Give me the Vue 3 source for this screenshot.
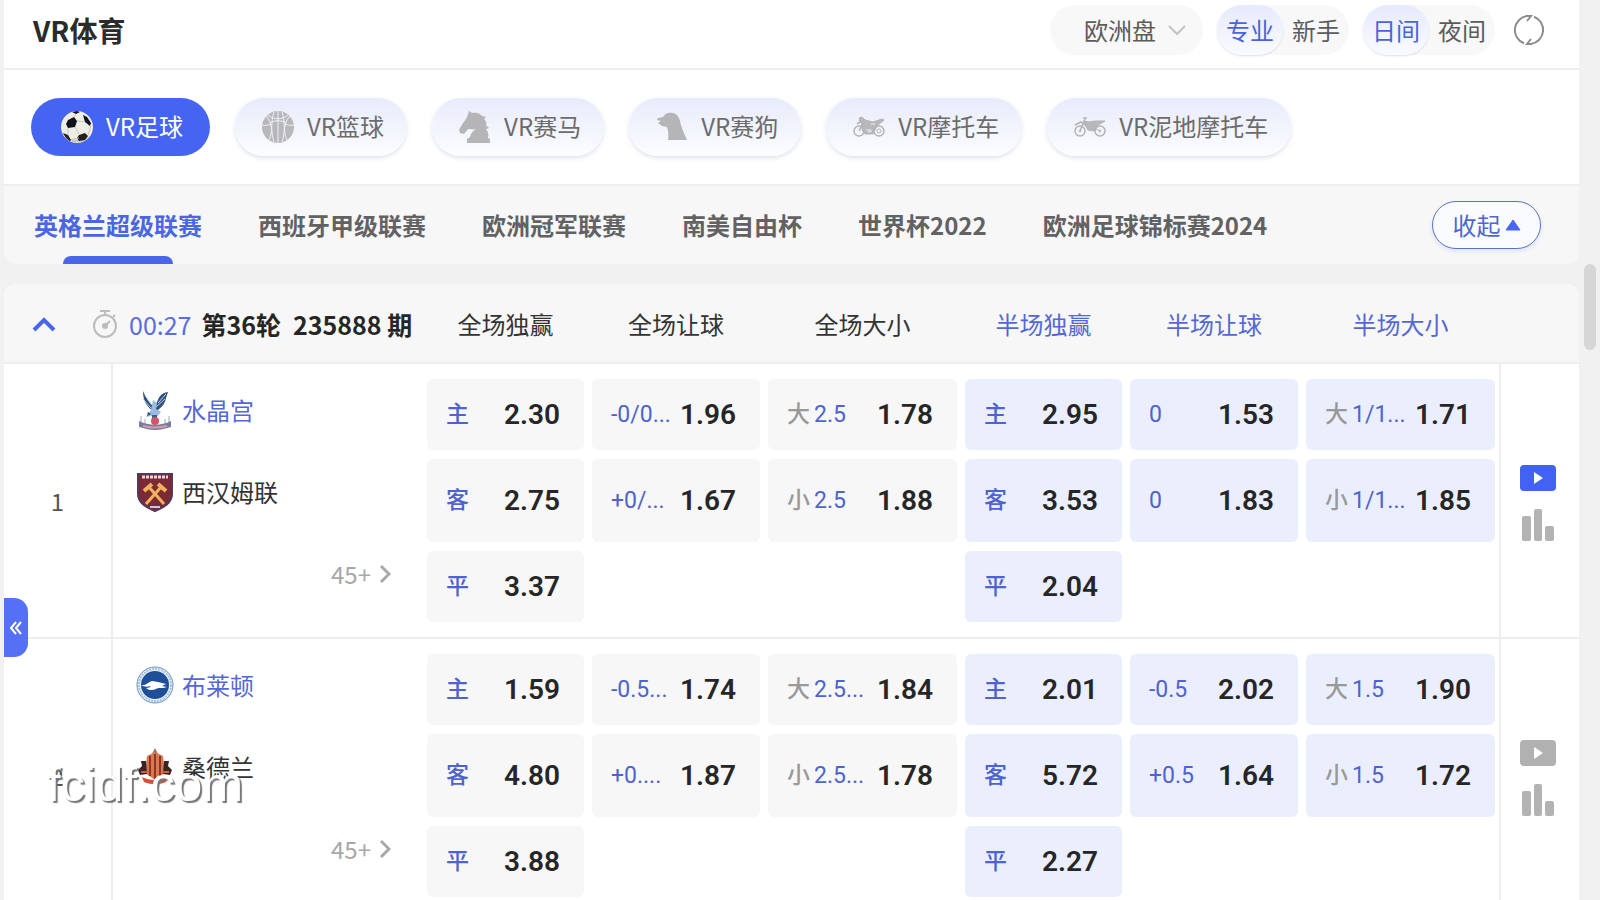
<script setup>
import { ref } from 'vue'

const market = ref('eu')
const level = ref('pro')
const theme = ref('day')
const sport = ref('football')
const league = ref(0)
const expanded = ref(true)

const sports = [
  { id: 'football', name: 'VR足球' },
  { id: 'basketball', name: 'VR篮球' },
  { id: 'horse', name: 'VR赛马' },
  { id: 'dog', name: 'VR赛狗' },
  { id: 'moto', name: 'VR摩托车' },
  { id: 'dirt', name: 'VR泥地摩托车' },
]

const leagues = ['英格兰超级联赛', '西班牙甲级联赛', '欧洲冠军联赛', '南美自由杯', '世界杯2022', '欧洲足球锦标赛2024']

const columns = ['全场独赢', '全场让球', '全场大小', '半场独赢', '半场让球', '半场大小']

// Each market: list of [side, line, price]
const matches = [
  {
    home: { name: '水晶宫', crest: 'palace' },
    away: { name: '西汉姆联', crest: 'westham' },
    live: true,
    markets: [
      [['主', '', '2.30'], ['客', '', '2.75'], ['平', '', '3.37']],
      [['', '-0/0...', '1.96'], ['', '+0/...', '1.67']],
      [['大', '2.5', '1.78'], ['小', '2.5', '1.88']],
      [['主', '', '2.95'], ['客', '', '3.53'], ['平', '', '2.04']],
      [['', '0', '1.53'], ['', '0', '1.83']],
      [['大', '1/1...', '1.71'], ['小', '1/1...', '1.85']],
    ],
  },
  {
    home: { name: '布莱顿', crest: 'brighton' },
    away: { name: '桑德兰', crest: 'sunderland' },
    live: false,
    markets: [
      [['主', '', '1.59'], ['客', '', '4.80'], ['平', '', '3.88']],
      [['', '-0.5...', '1.74'], ['', '+0....', '1.87']],
      [['大', '2.5...', '1.84'], ['小', '2.5...', '1.78']],
      [['主', '', '2.01'], ['客', '', '5.72'], ['平', '', '2.27']],
      [['', '-0.5', '2.02'], ['', '+0.5', '1.64']],
      [['大', '1.5', '1.90'], ['小', '1.5', '1.72']],
    ],
  },
]
</script>

<template>
  <div class="page">
    <main class="panel">
      <!-- Top bar -->
      <header class="topbar">
        <h1 class="title">VR体育</h1>
        <div class="tools">
          <label class="market">
            <select v-model="market" class="market-select" aria-label="盘口">
              <option value="eu">欧洲盘</option>
            </select>
            <svg class="market-arrow" viewBox="0 0 18 12" aria-hidden="true">
              <path d="M1 2l8 8 8-8" fill="none" stroke="#c4c4c4" stroke-width="2" />
            </svg>
          </label>
          <div class="switch">
            <button type="button" :class="{ on: level === 'pro' }" @click="level = 'pro'">专业</button>
            <button type="button" :class="{ on: level === 'new' }" @click="level = 'new'">新手</button>
          </div>
          <div class="switch">
            <button type="button" :class="{ on: theme === 'day' }" @click="theme = 'day'">日间</button>
            <button type="button" :class="{ on: theme === 'night' }" @click="theme = 'night'">夜间</button>
          </div>
          <button type="button" class="refresh" aria-label="刷新">
            <svg viewBox="0 0 32 32" fill="none" stroke="#8c8c8c" stroke-width="2">
              <path d="M11 29.300A14.200 14.200 0 0 1 14 2M13 2h5l-4 5" />
              <path d="M21 2.700A14.200 14.200 0 0 1 18 30M19 30h-5l4-5" />
            </svg>
          </button>
        </div>
      </header>

      <!-- Sports -->
      <nav class="sports">
        <button
          v-for="s in sports"
          :key="s.id"
          type="button"
          class="sport"
          :class="{ 'sport--active': sport === s.id }"
          @click="sport = s.id"
        >
          <svg class="sport-icon" viewBox="0 0 32 32" aria-hidden="true">
            <g v-if="s.id === 'football'">
              <circle cx="16" cy="16" r="16" fill="#efeee6" />
              <path d="M4 26a16 16 0 0 0 25-1c-7 4-17 5-25 1z" fill="#c9c8bb" />
              <path d="M7 9l6-3 3 4-2 6-7 1-2-4z" fill="#10131c" />
              <path d="M22 4l4 2 4 6-1 3-5-4z" fill="#10131c" />
              <path d="M18 24l6-2 3 3-3 4-6 1-2-3z" fill="#20201c" />
              <path d="M2 22l5 2 3 5-1 1a16 16 0 0 1-7-8z" fill="#20201c" />
              <path d="M11 1l5-1 3 1-4 2z" fill="#10131c" />
              <path d="M16 10l8 1M14 16l4 7M7 17l0 6M27 24l3-9M13 6l2-3M11 28l7-1" stroke="#c9c8bd" fill="none" />
            </g>
            <g v-else-if="s.id === 'basketball'">
              <circle cx="16" cy="16" r="16" fill="#b8b8ba" />
              <path
                d="M16 0v32M12 1c-3 9-3 21 0 30M20 1c3 9 3 21 0 30M4 5c6 6 7 16 3 24M28 5c-6 6-7 16-3 24M0 14c3 1 6 0 9-1M32 14c-3 1-6 0-9-1M6 4c5 5 15 5 20 0M8 12c5-3 11-3 16 0"
                fill="none"
                stroke="#eef0fb"
              />
            </g>
            <path
              v-else-if="s.id === 'horse'"
              d="M10 0l3 2c4-1 8 0 10 3l4 1-2 2c2 2 3 4 2 6l3 3-3 1c2 3 3 5 2 9l2 1v4H8v-4l3-2c1-4 3-6 6-8-3 1-6 0-8 0l-4 5-4-1-1-3 4-7 3-4 1-2z"
              fill="#b5b5b8"
            />
            <path
              v-else-if="s.id === 'dog'"
              d="M2 7l5-1c2-4 6-5 10-4 4 1 6 4 7 8 1 6 4 12 7 19H12c1-5 0-9-1-13l-5-1-4-3 3-2-4-1z"
              fill="#b5b5b8"
            />
            <g v-else-if="s.id === 'moto'" fill="none" stroke="#b3b3b6">
              <circle cx="6" cy="20" r="5" stroke-width="1.500" />
              <circle cx="26" cy="20" r="5" stroke-width="1.500" />
              <circle cx="26" cy="20" r="2" />
              <path d="M6 20l4-9-4-2M4 13l5-3" stroke-width="1.500" />
              <path d="M6 7l3-1 3 3 4 1 4 1 9-3 2 1-6 5-3 5-2 4h-8l-3-4 0-6z" fill="#b8b8bb" />
              <path d="M13 19l5 0M15 21l4-1M18 13l4 0" stroke="#edf0fb" />
            </g>
            <g v-else fill="none" stroke="#b3b3b6">
              <circle cx="6" cy="20" r="5" stroke-width="1.500" />
              <circle cx="26" cy="20" r="5" stroke-width="1.500" />
              <circle cx="6" cy="20" r="1" />
              <circle cx="26" cy="20" r="1" />
              <path d="M6 20l5-12M9 7h4M1 14l6-3 4 3" stroke-width="1.500" />
              <path d="M10 10l5 1 6-1 10 0-7 4-4 6-6-1-3-5z" fill="#b8b8bb" />
              <path d="M20 17l6 3" />
            </g>
          </svg>
          <span class="sport-name">{{ s.name }}</span>
        </button>
      </nav>

      <!-- Leagues -->
      <nav class="leagues">
        <button
          v-for="(name, i) in leagues"
          :key="name"
          type="button"
          class="league"
          :class="{ 'league--active': league === i }"
          @click="league = i"
        >
          {{ name }}
        </button>
        <button type="button" class="fold" @click="expanded = !expanded">
          收起
          <svg viewBox="0 0 16 12" width="16" height="12" aria-hidden="true">
            <path d="M8 1l7 10H1z" fill="#4a66f0" stroke="#4a66f0" stroke-linejoin="round" />
          </svg>
        </button>
      </nav>

      <!-- Odds -->
      <table class="odds">
        <colgroup>
          <col class="col-index" />
          <col class="col-teams" />
          <col class="col-win" />
          <col class="col-handicap" />
          <col class="col-total" />
          <col class="col-win" />
          <col class="col-handicap" />
          <col class="col-total" />
          <col class="col-media" />
        </colgroup>
        <thead>
          <tr>
            <th colspan="2" scope="col">
              <div class="round">
                <button type="button" class="round-toggle" aria-label="折叠" @click="expanded = !expanded">
                  <svg viewBox="0 0 24 16" width="24" height="16">
                    <path d="M2 14L12 4l10 10" fill="none" stroke="#4a66e8" stroke-width="4" />
                  </svg>
                </button>
                <svg class="clock" viewBox="0 0 26 30" width="26" height="30" fill="none" stroke="#bcbcbc" stroke-width="2" aria-hidden="true">
                  <circle cx="13" cy="17" r="11" />
                  <path d="M8 2h10M13 2v4M21 8l2-2" />
                  <circle cx="13" cy="17" r="2" fill="#bcbcbc" />
                  <path d="M14 16l4-4" />
                </svg>
                <span class="time">00:27</span>
                <span class="stage">第36轮</span>
                <span class="issue">235888 期</span>
              </div>
            </th>
            <th v-for="(c, i) in columns" :key="c" scope="col" :class="{ half: i > 2 }">{{ c }}</th>
            <th></th>
          </tr>
        </thead>
        <tbody v-show="expanded">
          <tr v-for="(m, n) in matches" :key="n">
            <td class="index">{{ n + 1 }}</td>
            <td class="teams">
              <div v-for="(t, side) in [m.home, m.away]" :key="t.name" class="team" :class="{ 'team--home': side === 0 }">
                <svg class="crest" viewBox="0 0 38 40" aria-hidden="true">
                  <g v-if="t.crest === 'palace'">
                    <path d="M7 1c0 9 3 15 9 19l6 0c5-4 7-7 8-12l2-6c-7 1-9 5-11 10l-3 5C13 13 10 8 7 1z" fill="#2f5078" />
                    <path d="M9 5l7 10M7 9l8 9M30 4l-8 9M29 9l-9 8" stroke="#c5d4e8" fill="none" />
                    <path d="M17 10l4 3-1 6 5 3-4 5-6-1-5 1 5-7z" fill="#9cbbe0" />
                    <path d="M12 22l3 2-4 2z" fill="#294873" />
                    <path d="M16 25h5v6h-5z" fill="#3e5e91" />
                    <circle cx="19" cy="31" r="4" fill="#d35568" />
                    <path d="M5 26v7M33 26v7M9 29v5M29 29v5" stroke="#d2d4dc" stroke-width="2" />
                    <path d="M3 31c10 5 22 5 32 0v6c-5 1-10 3-16 3S8 38 3 37z" fill="#777d9d" />
                    <path d="M7 36c8 2 16 2 24 0" stroke="#d999a8" stroke-width="2" fill="none" />
                  </g>
                  <g v-else-if="t.crest === 'westham'">
                    <path d="M2 2h34v20c0 9-8 13-17 17C10 35 2 31 2 22z" fill="#7c2936" stroke="#513a5b" stroke-width="2" />
                    <path d="M6 5h26" stroke="#ead8da" stroke-width="3" stroke-dasharray="3 1" />
                    <path d="M12 14l16 18M26 14L10 32" stroke="#f0b25c" stroke-width="3" />
                    <path d="M8 19l8-7M22 12l8 7" stroke="#f0b25c" stroke-width="4" />
                    <path d="M14 35h10" stroke="#d2c3e1" stroke-width="2" />
                  </g>
                  <g v-else-if="t.crest === 'brighton'">
                    <circle cx="19" cy="20" r="18" fill="#e9f4fc" stroke="#6b90bb" />
                    <circle cx="19" cy="20" r="16" fill="none" stroke="#a9c2dc" stroke-width="2" stroke-dasharray="2 1" />
                    <circle cx="19" cy="20" r="14" fill="#1f4f99" />
                    <path d="M5 20c5 1 7-3 11-4l6 1 8 2-4 2 5 1c-5 2-9 0-11 2-4 2-8 1-10-1 3 0 4-1 5-2-4 1-7 1-10-1z" fill="#fff" />
                  </g>
                  <g v-else>
                    <path d="M19 1l3 6h-6z" fill="#9a7768" />
                    <path d="M11 9l8-4 8 4 2 17-10 7-10-7z" fill="#d9794e" />
                    <path d="M14 9v20M19 7v25M24 9v20" stroke="#8e3428" stroke-width="2" />
                    <path d="M10 14l-5 0 1 5-4 4 2 5 7-1zM28 14l5 0-1 5 4 4-2 5-7-1z" fill="#3a2526" />
                    <path d="M5 25h7M26 25h7" stroke="#cf5d43" stroke-width="2" />
                    <path d="M6 30c8 4 18 4 26 0l-2 5c-8 3-14 3-22 0z" fill="#d5503c" />
                  </g>
                </svg>
                <span>{{ t.name }}</span>
              </div>
              <a class="more" href="#">
                45+
                <svg viewBox="0 0 12 20" width="12" height="20" aria-hidden="true">
                  <path d="M2 2l8 8-8 8" fill="none" stroke="#a8a8a8" stroke-width="3" />
                </svg>
              </a>
            </td>
            <td v-for="(market, c) in m.markets" :key="c" class="market-cell" :class="{ 'market-cell--half': c > 2 }">
              <div class="stack">
                <button v-for="(o, i) in market" :key="i" type="button" class="odd">
                  <span class="line">
                    <span v-if="o[0]" class="side" :class="{ 'side--muted': o[1] }">{{ o[0] }}</span>{{ o[1] }}
                  </span>
                  <span class="price">{{ o[2] }}</span>
                </button>
              </div>
            </td>
            <td class="media">
              <div class="media-icons">
                <button type="button" aria-label="视频">
                  <svg viewBox="0 0 38 26" width="38" height="26">
                    <rect x="1" width="36" height="26" rx="4" :fill="m.live ? '#4263f2' : '#b1b1b1'" />
                    <path d="M15 7l9 6-9 6z" fill="#fff" />
                  </svg>
                </button>
                <button type="button" aria-label="数据">
                  <svg viewBox="0 0 32 32" width="32" height="32" fill="#b3b3b3">
                    <rect y="7" width="9" height="25" rx="2" />
                    <rect x="12" width="8" height="32" rx="2" />
                    <rect x="23" y="17" width="9" height="15" rx="2" />
                  </svg>
                </button>
              </div>
            </td>
          </tr>
        </tbody>
      </table>
    </main>

    <button type="button" class="drawer" aria-label="展开侧栏">
      <svg viewBox="0 0 14 14" width="14" height="14">
        <path d="M7 1L2 7l5 6M12 1L7 7l5 6" fill="none" stroke="#fff" stroke-width="2" />
      </svg>
    </button>
    <div class="scroll-thumb"></div>
    <div class="watermark">fcidf.com</div>
  </div>
</template>

<style>
html,
body {
  height: 100%;
  overflow: hidden;
}
</style>

<style scoped>
.page {
  position: relative;
  height: 100vh;
  overflow: hidden;
  box-sizing: border-box;
  padding: 0 21px 0 4px;
  background: #f1f1f1;
  color: #333;
  font-family: 'Noto Sans CJK SC', 'Noto Sans', sans-serif;
  font-size: 24px;
  line-height: 32px;
}

button,
select {
  margin: 0;
  padding: 0;
  border: 0;
  background: none;
  color: inherit;
  font: inherit;
  cursor: pointer;
}

svg {
  display: block;
  flex: none;
}

/* ── Top bar ── */
.topbar {
  display: flex;
  align-items: center;
  justify-content: space-between;
  height: 68px;
  padding: 0 34px 0 29px;
  border-bottom: 2px solid #eee;
  background: #fff;
}

.title {
  margin: 0 0 8px;
  color: #2b2b2b;
  font-size: 28px;
  font-weight: 700;
}

.tools {
  display: flex;
  align-items: center;
  gap: 14px;
  margin-bottom: 8px;
  color: #5c5c5c;
}

.market {
  display: flex;
  align-items: center;
  height: 50px;
  padding: 0 17px 0 34px;
  border-radius: 25px;
  background: #f8f8f8;
}

.market-select {
  appearance: none;
  width: 84px;
  outline: none;
}

.market-arrow {
  width: 18px;
  height: 12px;
}

.switch {
  display: flex;
  border-radius: 25px;
  background: #f8f8f8;
}

.switch button {
  width: 66px;
  height: 50px;
  border-radius: 25px;
}

.switch .on {
  background: linear-gradient(#e6eafc, #fafbff);
  box-shadow: 0 1px 2px rgba(120, 130, 160, 0.25);
  color: #4a63dc;
}

.refresh svg {
  width: 32px;
  height: 32px;
}

.refresh {
  margin-left: 4px;
}

/* ── Sports ── */
.sports {
  display: flex;
  gap: 25px;
  padding: 28px 27px;
  border-bottom: 2px solid #eee;
  background: #fff;
}

.sport {
  display: flex;
  align-items: center;
  gap: 13px;
  height: 58px;
  padding: 0 23px 0 27px;
  border-radius: 29px;
  background: linear-gradient(#e8ebfb, #fbfdff);
  box-shadow: 0 2px 4px rgba(120, 140, 170, 0.25);
  color: #6c6c6c;
  white-space: nowrap;
}

.sport--active {
  padding: 0 27px 0 30px;
  background: #4664f2;
  box-shadow: none;
  color: #fff;
}

.sport-icon {
  width: 32px;
  height: 32px;
}

.sport-name {
  padding-bottom: 3px;
}

/* ── Leagues ── */
.leagues {
  display: flex;
  align-items: center;
  gap: 56px;
  height: 78px;
  padding: 0 38px 0 30px;
  border-radius: 0 0 12px 12px;
  background: #f7f7f7;
}

.league {
  position: relative;
  height: 78px;
  color: #626262;
  font-weight: 700;
  white-space: nowrap;
}

.league--active {
  color: #4a66e0;
}

.league--active::after {
  content: '';
  position: absolute;
  bottom: 0;
  left: 50%;
  width: 110px;
  height: 8px;
  margin-left: -55px;
  border-radius: 8px 8px 0 0;
  background: #4a66e8;
}

.fold {
  display: flex;
  align-items: center;
  justify-content: center;
  gap: 4px;
  width: 109px;
  height: 48px;
  margin-left: auto;
  border: 1px solid #5c73c4;
  border-radius: 24px;
  background: #fafbff;
  box-shadow: 0 2px 4px rgba(70, 100, 240, 0.15);
  color: #4f66cc;
}

/* ── Odds table ── */
.odds {
  width: 100%;
  margin-top: 20px;
  border-spacing: 0;
  table-layout: fixed;
  background: #fff;
  border-radius: 12px 12px 0 0;
}

.odds th,
.odds td {
  padding: 0;
  border-bottom: 2px solid #eee;
}

.odds th {
  height: 76px;
  padding-top: 2px;
  background: #f7f7f7;
  color: #333;
  font-weight: 400;
}

.odds th:first-child {
  border-top-left-radius: 12px;
}

.odds th:last-child {
  border-top-right-radius: 12px;
}

.odds th.half {
  color: #5468d4;
}

.col-index {
  width: 109px;
}

.col-teams {
  width: 310px;
}

.col-win {
  width: 165px;
}

.col-handicap {
  width: 176px;
}

.col-total {
  width: 197px;
}

.col-media {
  width: 80px;
}

.round {
  display: flex;
  align-items: center;
  padding-left: 28px;
  font-size: 25px;
  white-space: nowrap;
}

.clock {
  margin: 0 11px 0 36px;
}

.time {
  color: #5b6cdc;
}

.stage,
.issue {
  color: #262626;
  font-weight: 700;
}

.stage {
  margin-left: 10px;
}

.issue {
  margin-left: 12px;
}

.odds .index {
  border-right: 2px solid #eee;
  color: #555;
  text-align: center;
}

.odds .teams {
  padding: 5px 32px 0 23px;
  vertical-align: top;
}

.team {
  display: flex;
  align-items: center;
  gap: 8px;
  height: 82px;
}

.team--home {
  color: #5468d4;
}

.crest {
  width: 38px;
  height: 40px;
}

.more {
  display: flex;
  align-items: center;
  justify-content: flex-end;
  gap: 8px;
  height: 82px;
  color: #a8a8a8;
  text-decoration: none;
}

.odds .market-cell {
  padding: 15px 4px;
  vertical-align: top;
}

.stack {
  display: flex;
  flex-direction: column;
  gap: 9px;
}

.odd {
  display: flex;
  align-items: center;
  justify-content: space-between;
  height: 71px;
  padding: 0 24px 0 19px;
  border-radius: 6px;
  background: #f7f7f7;
  white-space: nowrap;
}

.odd:nth-child(2) {
  height: 83px;
}

.market-cell--half .odd {
  background: #ebeffd;
}

.line {
  display: flex;
  align-items: center;
  gap: 4px;
  color: #4e63cf;
  font-family: Roboto, 'Noto Sans CJK SC', sans-serif;
  font-size: 23px;
}

.side {
  font-weight: 500;
}

.side--muted {
  color: #999;
}

.price {
  color: #262626;
  font-family: Roboto, sans-serif;
  font-size: 28px;
  font-weight: 600;
}

.odds .media {
  padding: 4px 4px 0 0;
  border-left: 2px solid #eee;
}

.media-icons {
  display: flex;
  flex-direction: column;
  align-items: center;
  gap: 18px;
}

/* ── Overlays ── */
.drawer {
  position: absolute;
  top: 598px;
  left: 4px;
  display: flex;
  align-items: center;
  justify-content: center;
  width: 24px;
  height: 59px;
  border-radius: 0 14px 14px 0;
  background: #5570f5;
}

.scroll-thumb {
  position: absolute;
  top: 264px;
  right: 4px;
  width: 12px;
  height: 86px;
  border-radius: 6px;
  background: #d6d6d6;
}

.watermark {
  position: absolute;
  top: 756px;
  left: 47px;
  color: #fff;
  font-family: 'Liberation Sans', Arial, sans-serif;
  font-size: 49px;
  line-height: 56px;
  text-shadow: 2px 2px 1px #777;
  pointer-events: none;
}
</style>
